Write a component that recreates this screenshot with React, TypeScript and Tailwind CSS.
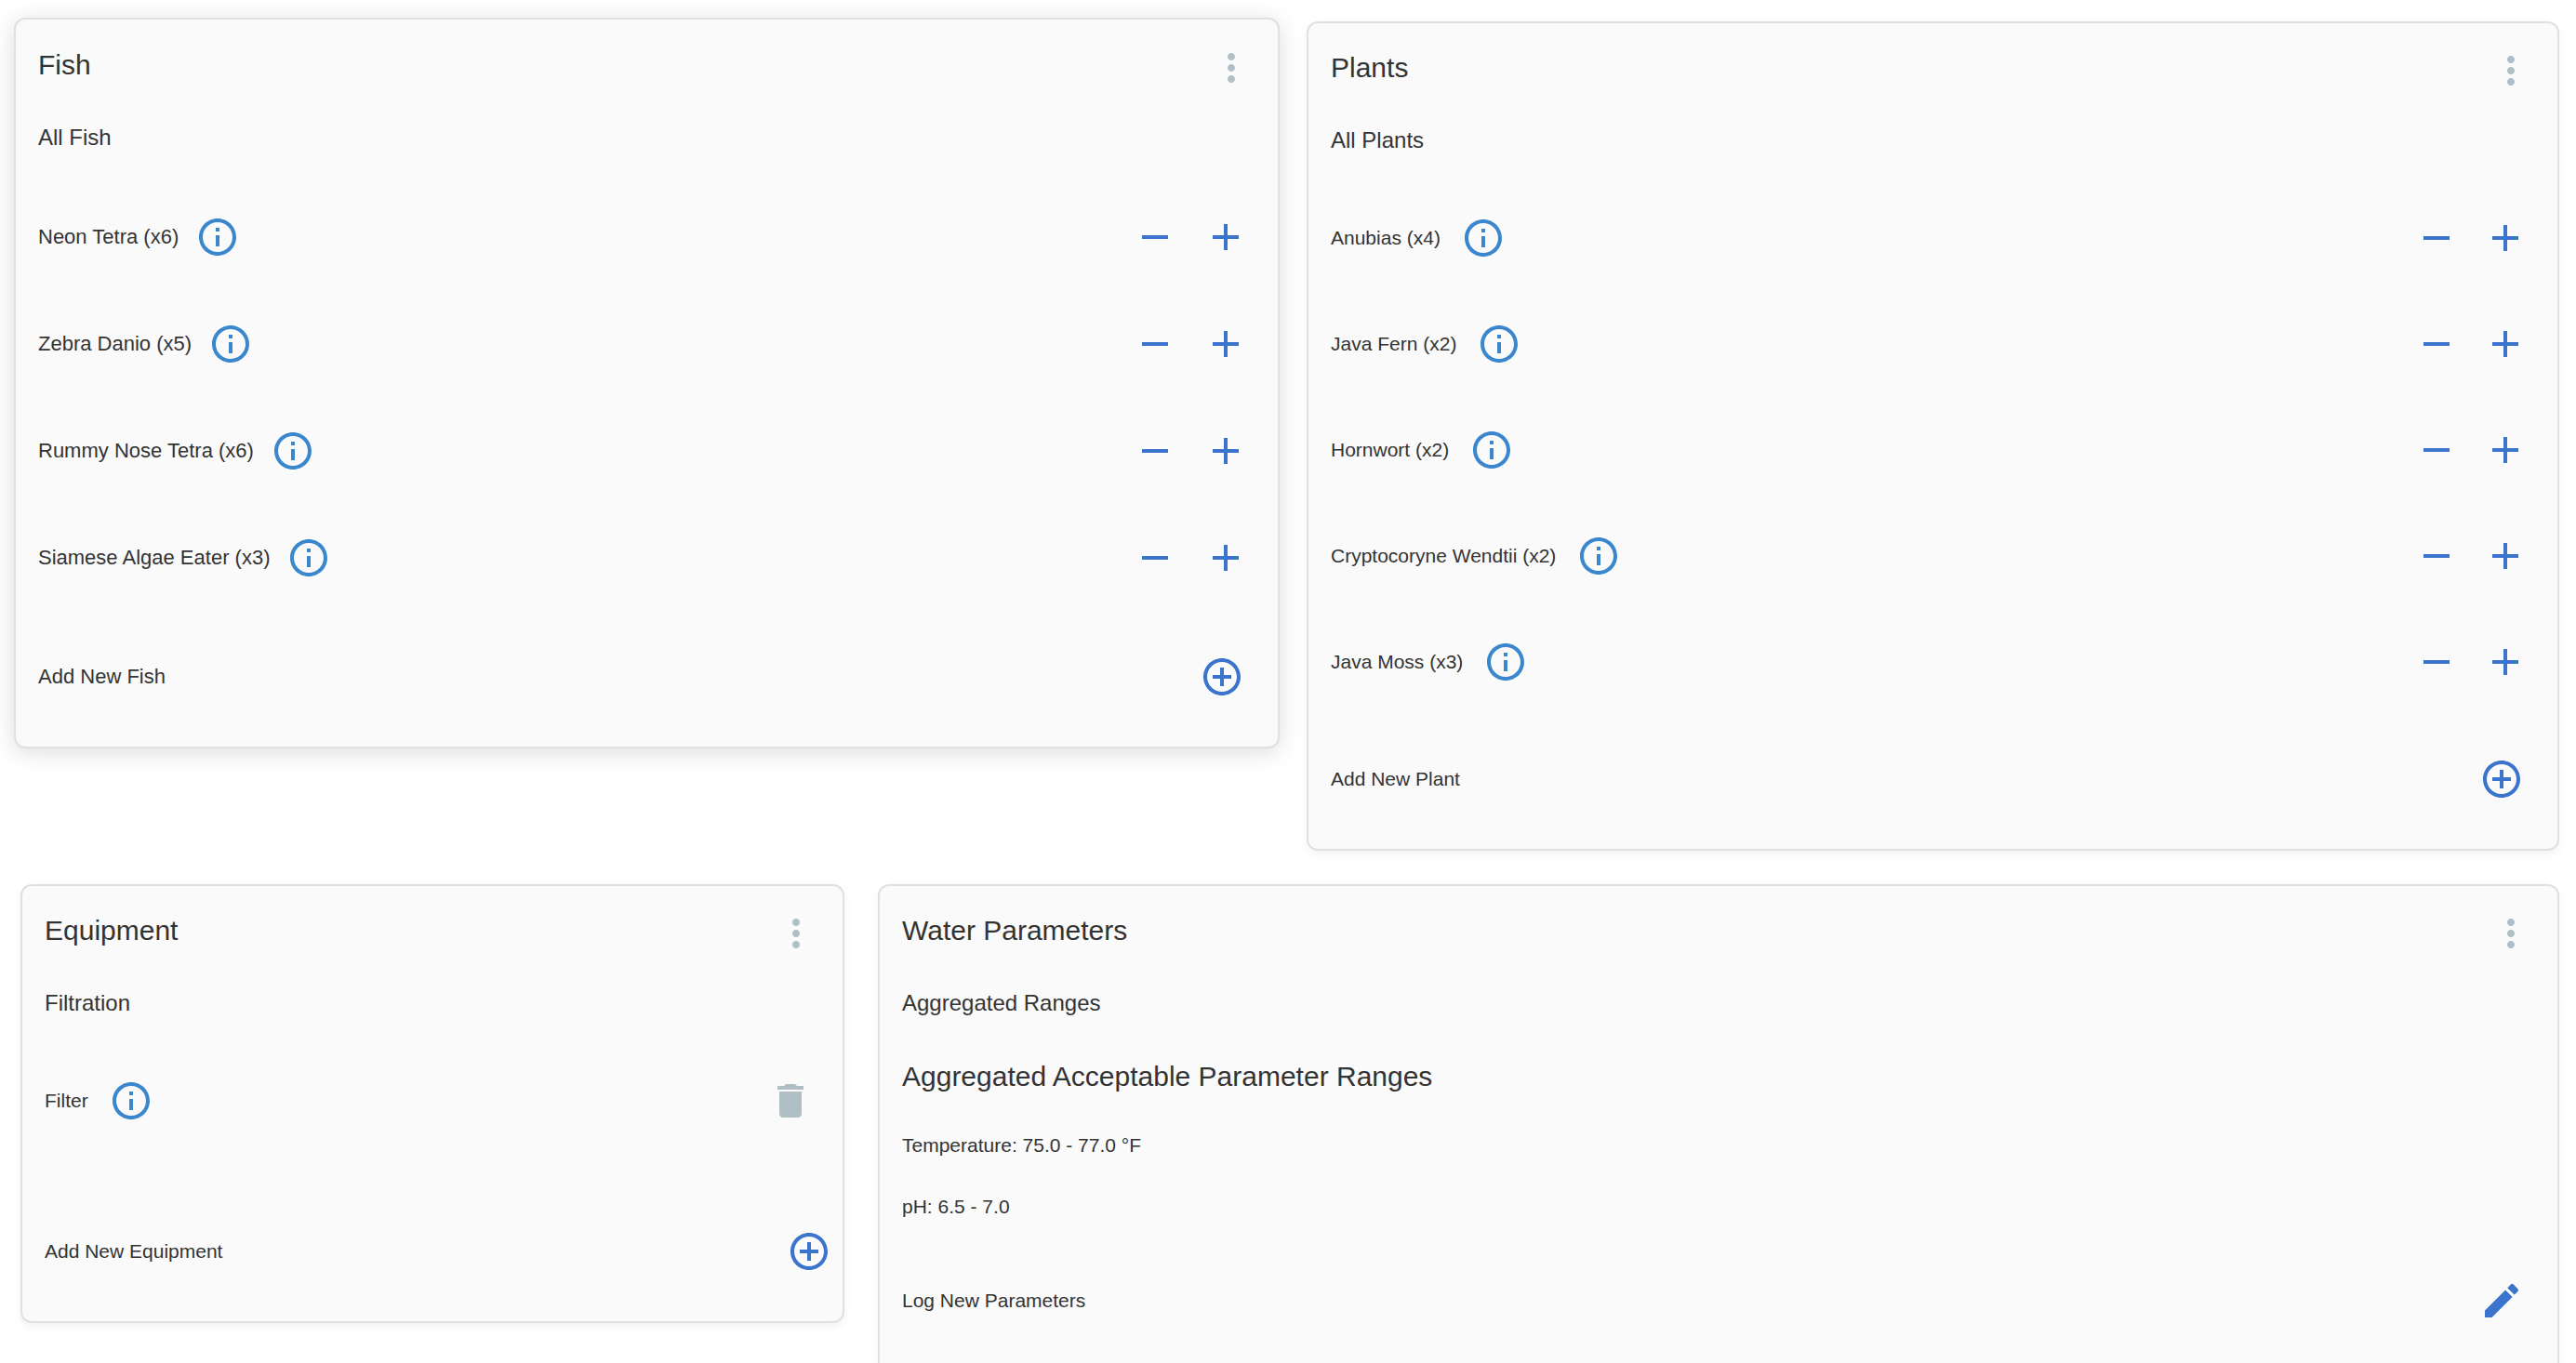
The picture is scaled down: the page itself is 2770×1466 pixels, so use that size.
import type { ReactNode } from "react";
import {
  MdAdd,
  MdAddCircleOutline,
  MdDelete,
  MdEdit,
  MdInfoOutline,
  MdMoreVert,
  MdRemove,
} from "react-icons/md";
import clsx from "clsx";

const fish = [
  { name: "Neon Tetra", count: 6 },
  { name: "Zebra Danio", count: 5 },
  { name: "Rummy Nose Tetra", count: 6 },
  { name: "Siamese Algae Eater", count: 3 },
];

const plants = [
  { name: "Anubias", count: 4 },
  { name: "Java Fern", count: 2 },
  { name: "Hornwort", count: 2 },
  { name: "Cryptocoryne Wendtii", count: 2 },
  { name: "Java Moss", count: 3 },
];

function IconButton({
  label,
  className,
  children,
}: {
  label: string;
  className?: string;
  children: ReactNode;
}) {
  return (
    <button
      type="button"
      aria-label={label}
      className={clsx("flex shrink-0 items-center justify-center rounded-full text-5xl", className)}
    >
      {children}
    </button>
  );
}

function Card({
  title,
  subtitle,
  className,
  raised = false,
  children,
}: {
  title: string;
  subtitle: string;
  className: string;
  raised?: boolean;
  children: ReactNode;
}) {
  return (
    <section
      className={clsx(
        "self-start rounded-xl border-2 border-[#e0e0e0] bg-[#fafafa] px-6",
        raised
          ? "relative z-10 -mx-[7px] -mt-1 pt-[25px] text-[22px] shadow-[0_4px_24px_rgba(0,0,0,0.14)]"
          : "pt-6 text-[21px] shadow-[0_4px_10px_rgba(0,0,0,0.05)]",
        className,
      )}
    >
      <header className="flex items-start justify-between">
        <h2 className="text-[30px] leading-[48px]">{title}</h2>
        <IconButton label={`${title} options`} className="h-[54px] w-[52px] text-[#b0bec5]">
          <MdMoreVert />
        </IconButton>
      </header>
      <h3 className="mt-[27px] text-2xl leading-[42px]">{subtitle}</h3>
      {children}
    </section>
  );
}

function Item({ label, tall = false, children }: { label: string; tall?: boolean; children: ReactNode }) {
  return (
    <li className={clsx("flex items-center justify-between", tall ? "h-[115px]" : "h-[114px]")}>
      <div className={clsx("flex items-center", tall ? "gap-1.5" : "gap-2.5")}>
        <span>{label}</span>
        <IconButton label={`About ${label}`} className="size-[72px] text-[#3a87cd]">
          <MdInfoOutline />
        </IconButton>
      </div>
      <div className={clsx("flex text-[#3a74cd]", tall ? "gap-3" : "gap-2.5")}>{children}</div>
    </li>
  );
}

function Stepper({ name }: { name: string }) {
  return (
    <>
      <IconButton label={`Remove one ${name}`} className="size-16">
        <MdRemove />
      </IconButton>
      <IconButton label={`Add one ${name}`} className="size-16">
        <MdAdd />
      </IconButton>
    </>
  );
}

function ActionRow({ label, className, children }: { label: string; className: string; children: ReactNode }) {
  return (
    <div className={clsx("flex h-[114px] items-center justify-between", className)}>
      <span>{label}</span>
      {children}
    </div>
  );
}

export default function App() {
  return (
    <main className="h-screen overflow-hidden bg-white pt-[23px] pr-[18px] pl-[22px] font-['Liberation_Sans',Arial,sans-serif] leading-8 text-[#333]">
      <div className="grid grid-cols-12 gap-9">
        <Card title="Fish" subtitle="All Fish" raised className="col-span-6 pb-[18px]">
          <ul className="mt-7">
            {fish.map((f) => (
              <Item key={f.name} label={`${f.name} (x${f.count})`} tall>
                <Stepper name={f.name} />
              </Item>
            ))}
          </ul>
          <ActionRow label="Add New Fish" className="mt-3.5">
            <IconButton label="Add new fish" className="size-[72px] text-[#3a74cd]">
              <MdAddCircleOutline />
            </IconButton>
          </ActionRow>
        </Card>

        <Card title="Plants" subtitle="All Plants" className="col-span-6 pb-[18px]">
          <ul className="mt-[27px]">
            {plants.map((p) => (
              <Item key={p.name} label={`${p.name} (x${p.count})`}>
                <Stepper name={p.name} />
              </Item>
            ))}
          </ul>
          <ActionRow label="Add New Plant" className="mt-3">
            <IconButton label="Add new plant" className="size-[72px] text-[#3a74cd]">
              <MdAddCircleOutline />
            </IconButton>
          </ActionRow>
        </Card>

        <Card title="Equipment" subtitle="Filtration" className="col-span-4 pb-[18px]">
          <ul className="mt-[27px]">
            <Item label="Filter">
              <IconButton label="Delete filter" className="size-16 text-[#b0bec5]">
                <MdDelete />
              </IconButton>
            </Item>
          </ul>
          <ActionRow label="Add New Equipment" className="-mr-6 mt-12">
            <IconButton label="Add new equipment" className="size-[72px] text-[#3a74cd]">
              <MdAddCircleOutline />
            </IconButton>
          </ActionRow>
        </Card>

        <Card title="Water Parameters" subtitle="Aggregated Ranges" className="col-span-8 pb-12">
          <h4 className="mt-[34px] text-[30px] leading-[48px]">Aggregated Acceptable Parameter Ranges</h4>
          <p className="mt-[34px]">Temperature: 75.0 - 77.0 °F</p>
          <p className="mt-[34px]">pH: 6.5 - 7.0</p>
          <ActionRow label="Log New Parameters" className="mt-7">
            <IconButton label="Log new parameters" className="size-[72px] text-[#3a74cd]">
              <MdEdit />
            </IconButton>
          </ActionRow>
        </Card>
      </div>
    </main>
  );
}
